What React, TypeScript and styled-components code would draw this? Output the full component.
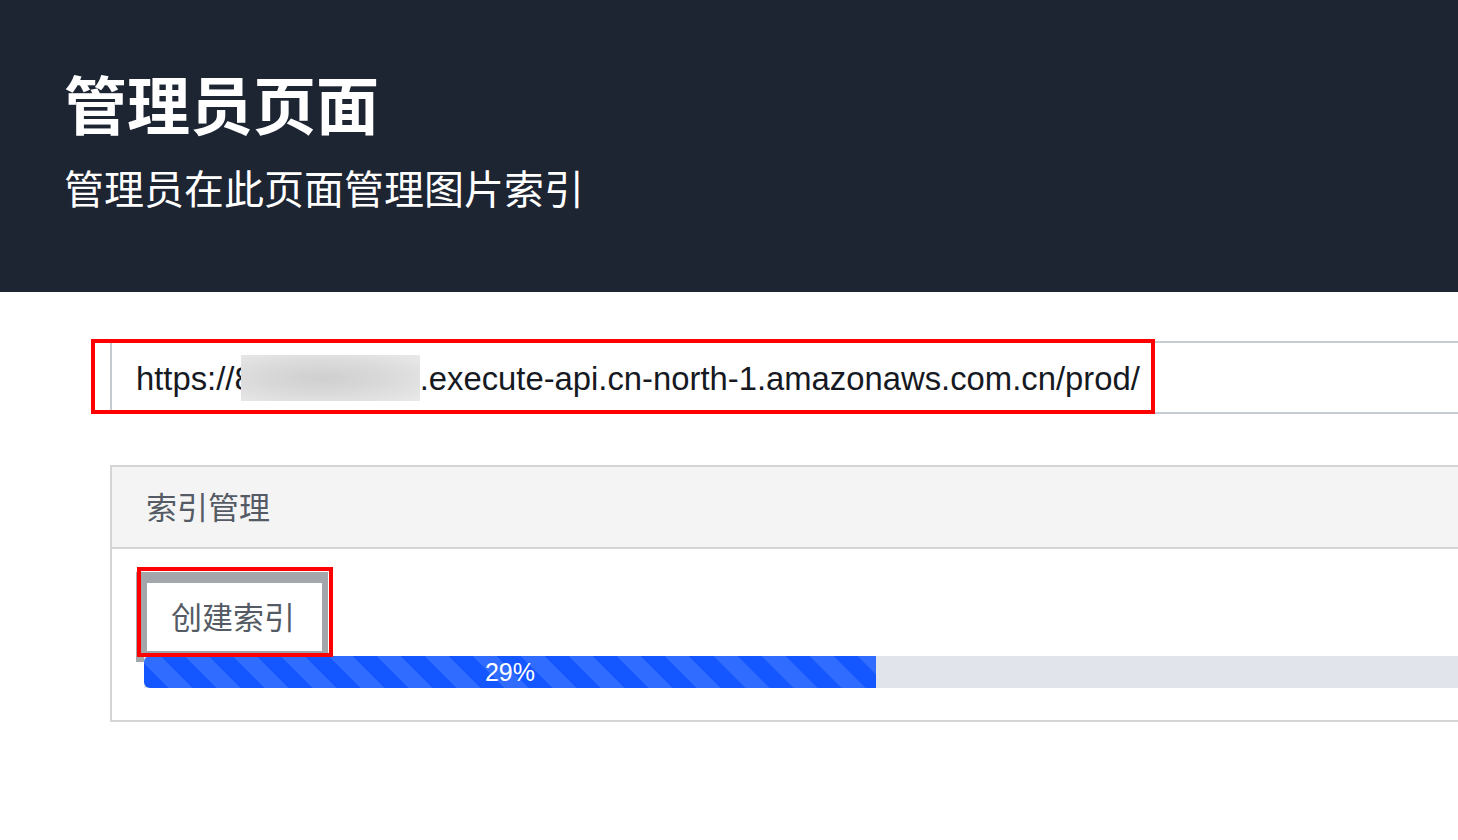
import React from 'react'
import styled, { createGlobalStyle } from 'styled-components'

const PROGRESS = 29

const GlobalStyle = createGlobalStyle`
  html, body {
    margin: 0;
    padding: 0;
    background: #ffffff;
    overflow: hidden;
  }
  body {
    font-family: "Liberation Sans", Arial, "Noto Sans CJK SC", sans-serif;
  }
`

const Page = styled.div`
  width: 1458px;
  height: 840px;
  overflow: hidden;
`

const Header = styled.header`
  background: #1d2432;
  height: 292px;
  box-sizing: border-box;
  padding: 70px 0 0 64px;
  color: #ffffff;
  font-family: "Noto Sans CJK SC", sans-serif;
`

const Title = styled.h1`
  margin: 0;
  font-size: 63px;
  line-height: 64px;
  font-weight: 700;
`

const Subtitle = styled.p`
  margin: 33px 0 0;
  font-size: 40px;
  line-height: 40px;
  font-weight: 400;
`

const Main = styled.main`
  padding: 49px 0 0 110px;
  display: flex;
  flex-direction: column;
  gap: 51px;
`

const Marked = styled.div`
  position: relative;
  display: flex;
`

const Highlight = styled.span<{ $top: number; $left: number; $width: number; $height: number }>`
  position: absolute;
  top: ${(p) => p.$top}px;
  left: ${(p) => p.$left}px;
  width: ${(p) => p.$width}px;
  height: ${(p) => p.$height}px;
  box-sizing: border-box;
  border: 4px solid #ff0000;
  pointer-events: none;
  z-index: 3;
`

const UrlField = styled.div`
  width: 2592px;
  height: 73px;
  box-sizing: border-box;
  border: 2px solid #c6cad1;
  border-right: none;
  display: flex;
  align-items: center;
  padding: 3px 0 0 24px;
  font-family: "Liberation Sans", Arial, sans-serif;
  font-size: 32.8px;
  color: #16191f;
  white-space: nowrap;
`

const Redacted = styled.span`
  display: inline-block;
  width: 179px;
  height: 46px;
  margin: -3px 0 0 -12px;
  background: radial-gradient(ellipse at 45% 50%, #cfcfcf 0%, #d9d9d9 45%, #e9e9e9 100%);
  position: relative;
  z-index: 1;
`

const Card = styled.section`
  width: 2592px;
  border: 2px solid #d5d5d5;
  border-right: none;
`

const CardHeader = styled.div`
  background: #f4f4f4;
  height: 82px;
  box-sizing: border-box;
  display: flex;
  align-items: center;
  padding: 0 0 4px 34px;
  border-bottom: 2px solid #d5d5d5;
  font-family: "Noto Sans CJK SC", sans-serif;
  font-size: 31px;
  color: #545b64;
`

const CardBody = styled.div`
  padding: 32px 0 32px 32px;
  display: flex;
  flex-direction: column;
  align-items: flex-start;
  gap: 3px;
`

const Button = styled.button`
  position: relative;
  margin-left: 1px;
  width: 179px;
  height: 72px;
  box-sizing: border-box;
  background: #ffffff;
  border: 2px solid #545b64;
  padding: 0 0 3px 24px;
  text-align: left;
  font-family: "Noto Sans CJK SC", sans-serif;
  font-size: 31px;
  color: #545b64;
  cursor: pointer;
  z-index: 1;

  &::before {
    content: '';
    position: absolute;
    top: -11px;
    left: -11px;
    right: -6px;
    bottom: -11px;
    background: #a3a7ac;
    z-index: -1;
  }
`

const ButtonFace = styled.span`
  position: absolute;
  inset: 0;
  background: #ffffff;
  z-index: -1;
`

const Track = styled.div`
  width: 2524px;
  height: 32px;
  background: #e1e4ea;
  position: relative;
  z-index: 2;
`

const Fill = styled.div`
  height: 100%;
  border-radius: 6px 0 0 6px;
  background-color: #1456ff;
  background-image: repeating-linear-gradient(
    45deg,
    #1456ff 0px,
    #1456ff 17px,
    #2f6cff 17px,
    #2f6cff 34px
  );
  display: flex;
  align-items: center;
  justify-content: center;
  color: #ffffff;
  font-family: "Liberation Sans", Arial, sans-serif;
  font-size: 25px;
`

export default function App() {
  return (
    <Page>
      <GlobalStyle />
      <Header>
        <Title>管理员页面</Title>
        <Subtitle>管理员在此页面管理图片索引</Subtitle>
      </Header>
      <Main>
        <Marked>
          <UrlField>
            https://8
            <Redacted />
            .execute-api.cn-north-1.amazonaws.com.cn/prod/
          </UrlField>
          <Highlight $top={-2} $left={-19} $width={1064} $height={75} />
        </Marked>
        <Card>
          <CardHeader>索引管理</CardHeader>
          <CardBody>
            <Marked>
              <Button>
                <ButtonFace />
                创建索引
              </Button>
              <Highlight $top={-14} $left={-7} $width={196} $height={90} />
            </Marked>
            <Track>
              <Fill style={{ width: `${PROGRESS}%` }}>{PROGRESS}%</Fill>
            </Track>
          </CardBody>
        </Card>
      </Main>
    </Page>
  )
}
